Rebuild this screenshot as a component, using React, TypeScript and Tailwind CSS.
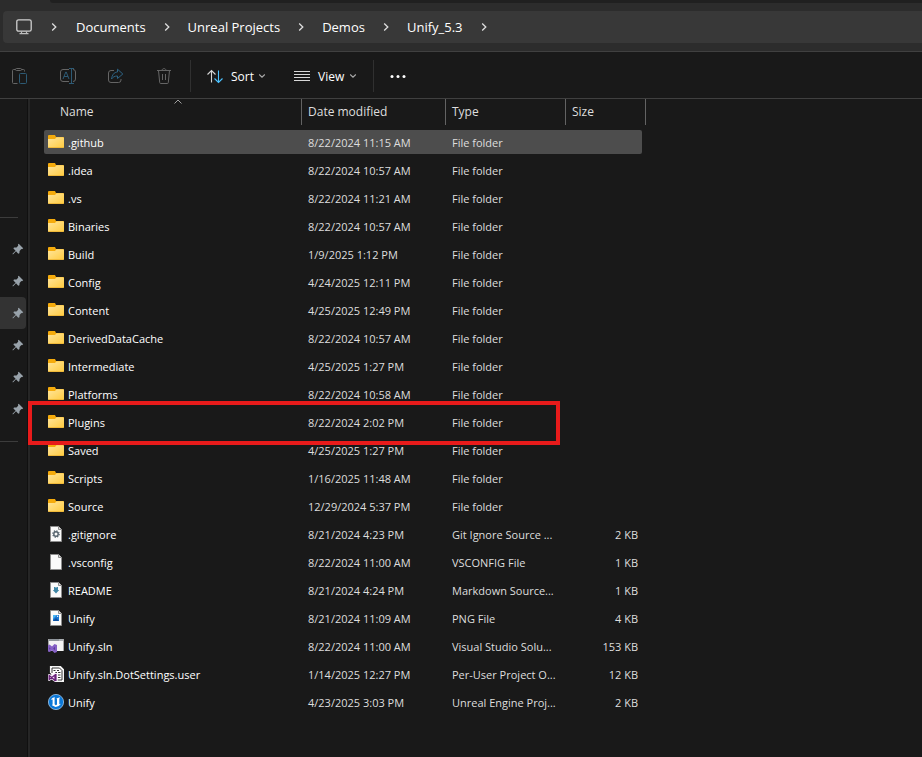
import { Fragment, type ReactNode } from "react";

type IconKind = "folder" | "gear" | "blank" | "markdown" | "image" | "solution" | "settings" | "unreal";

interface Entry {
  name: string;
  modified: string;
  type: string;
  size?: string;
  icon: IconKind;
}

const folder = (name: string, modified: string): Entry => ({ name, modified, type: "File folder", icon: "folder" });

const entries: Entry[] = [
  folder(".github", "8/22/2024 11:15 AM"),
  folder(".idea", "8/22/2024 10:57 AM"),
  folder(".vs", "8/22/2024 11:21 AM"),
  folder("Binaries", "8/22/2024 10:57 AM"),
  folder("Build", "1/9/2025 1:12 PM"),
  folder("Config", "4/24/2025 12:11 PM"),
  folder("Content", "4/25/2025 12:49 PM"),
  folder("DerivedDataCache", "8/22/2024 10:57 AM"),
  folder("Intermediate", "4/25/2025 1:27 PM"),
  folder("Platforms", "8/22/2024 10:58 AM"),
  folder("Plugins", "8/22/2024 2:02 PM"),
  folder("Saved", "4/25/2025 1:27 PM"),
  folder("Scripts", "1/16/2025 11:48 AM"),
  folder("Source", "12/29/2024 5:37 PM"),
  { name: ".gitignore", modified: "8/21/2024 4:23 PM", type: "Git Ignore Source ...", size: "2 KB", icon: "gear" },
  { name: ".vsconfig", modified: "8/22/2024 11:00 AM", type: "VSCONFIG File", size: "1 KB", icon: "blank" },
  { name: "README", modified: "8/21/2024 4:24 PM", type: "Markdown Source...", size: "1 KB", icon: "markdown" },
  { name: "Unify", modified: "8/21/2024 11:09 AM", type: "PNG File", size: "4 KB", icon: "image" },
  { name: "Unify.sln", modified: "8/22/2024 11:00 AM", type: "Visual Studio Solu...", size: "153 KB", icon: "solution" },
  { name: "Unify.sln.DotSettings.user", modified: "1/14/2025 12:27 PM", type: "Per-User Project O...", size: "12 KB", icon: "settings" },
  { name: "Unify", modified: "4/23/2025 3:03 PM", type: "Unreal Engine Proj...", size: "2 KB", icon: "unreal" },
];

const crumbs = ["Documents", "Unreal Projects", "Demos", "Unify_5.3"];

function Svg({ children }: { children: ReactNode }) {
  return (
    <svg viewBox="0 0 16 16" className="size-4 shrink-0" fill="none" aria-hidden="true">
      {children}
    </svg>
  );
}

function Page() {
  return (
    <>
      <path d="M2.5 .5h8l3 3v12h-11z" fill="#fafafa" stroke="#8d8d8d" />
      <path d="M10.5 .5v3h3" fill="#ddd" stroke="#8d8d8d" />
    </>
  );
}

function FileIcon({ kind }: { kind: IconKind }) {
  switch (kind) {
    case "folder":
      return (
        <Svg>
          <defs>
            <linearGradient id="folderFront" x1="0" y1="0" x2="1" y2="1">
              <stop offset="0" stopColor="#ffe59c" />
              <stop offset="1" stopColor="#ffcb3f" />
            </linearGradient>
          </defs>
          <path d="M0 2a1 1 0 0 1 1-1h6l1 2h7a1 1 0 0 1 1 1v4H0z" fill="#f5ab0c" />
          <path d="M0 5h7l1.500-1.800H15a1 1 0 0 1 1 1V13a1 1 0 0 1-1 1H1a1 1 0 0 1-1-1z" fill="url(#folderFront)" />
          <path d="M.5 13.500h15" stroke="#f0b93a" />
        </Svg>
      );
    case "gear":
      return (
        <Svg>
          <Page />
          <circle cx="8" cy="8" r="2.2" stroke="#56646e" strokeWidth="1.4" />
          <circle cx="8" cy="8" r="3.2" stroke="#56646e" strokeWidth="1.2" strokeDasharray="1.3 1.2" />
        </Svg>
      );
    case "blank":
      return (
        <Svg>
          <Page />
        </Svg>
      );
    case "markdown":
      return (
        <Svg>
          <Page />
          <path d="M6 5h1l1 .8L9 5h1v3h1.2L8 11.5 4.8 8H6z" fill="#3f87a6" />
        </Svg>
      );
    case "image":
      return (
        <Svg>
          <Page />
          <path d="M5 5h6v6H5z" fill="#1976d2" />
          <path d="M5 5h4L5 9z" fill="#49b5f5" />
          <path d="M5 11l3-3 3 3z" fill="#0b4fa0" />
          <circle cx="9.6" cy="6.3" r=".7" fill="#fff" />
        </Svg>
      );
    case "solution":
      return (
        <Svg>
          <path d="M0 1h16v12H0z" fill="#f4f4f4" />
          <path d="M0 1h16v2H0z" fill="#8f959b" />
          <path d="M.5 1v12M15.5 1v12" stroke="#a5a5a5" />
          <path d="M11.500 2h1M13.500 2h1" stroke="#fff" />
          <path d="M0 7.500l1.500-1L4 8.500 6.500 6 9 7v7l-2.500 1L4 12.500 1.500 14 0 13.500z" fill="#8661c5" />
          <path d="M1.200 9.200v2.600l1.400-1.300zM7 8.800v3.400l-1.800-1.700z" fill="#5b3a9b" />
        </Svg>
      );
    case "settings":
      return (
        <Svg>
          <path d="M2.500 7V.6h10l2.900 2.900v11.900H7" fill="#fff" stroke="#f4f4f4" strokeWidth="1.200" />
          <path d="M4 7V2h7.500L14 4.500V14H9.500" stroke="#333" />
          <path d="M5.500 4.500h2M9 4.500h2M7 6.500h2M10 6.500h2.500M10 9h2.500M10 11.500h2.500" stroke="#333" />
          <path d="M0 8.500l1.500-.5 2 1L7 6.500l2.500 1v7.800L7 16l-3.500-2.500-2 1.500L0 14.500z" fill="#f8f0fa" />
          <path d="M1.200 9.500v4l5.800-4.500v5.500z" stroke="#68217a" strokeWidth="1.400" strokeLinejoin="round" />
          <path d="M7.800 8v7" stroke="#68217a" strokeWidth="1.600" />
        </Svg>
      );
    case "unreal":
      return (
        <Svg>
          <circle cx="8" cy="8" r="7.600" fill="#0b78d8" stroke="#9fc9ee" strokeWidth=".8" />
          <path
            d="M3 5.800C4.200 4 5.400 3.300 7 3.300L6.600 4.300V10.300L7.800 11.200 9 10.500V5L8.300 4.500 12 3.300 11.300 5V10.300L12.800 9.800C11.700 11.800 10 12.800 7.500 12.900L4 11.300 4.600 10.300V5.500z"
            fill="#fff"
          />
        </Svg>
      );
  }
}

function ChevronRight() {
  return (
    <svg viewBox="0 0 6 8" className="h-2 w-1.5" fill="none" aria-hidden="true">
      <path d="M1.200 .5 4.800 4 1.200 7.500" stroke="#dedede" strokeWidth="1.300" />
    </svg>
  );
}

function ChevronDown() {
  return (
    <svg viewBox="0 0 8 8" className="size-2" fill="none" aria-hidden="true">
      <path d="M1.200 2.500 4 5.200 6.800 2.500" stroke="#a8a8a8" strokeWidth="1.100" />
    </svg>
  );
}

function AddressBar() {
  return (
    <header className="border-b border-[#404040] bg-[#2c2c2c]">
      <div className="ml-[50px] h-[3px] rounded-bl-sm bg-[#202020]" />
      <nav aria-label="Address" className="mt-2 mb-2 ml-[3px] flex h-8 items-center rounded-l-[4px] bg-[#383838] pl-[13px] text-[13px] leading-5 text-white">
        <button aria-label="This PC" className="size-4">
          <Svg>
            <rect x=".8" y=".8" width="14.400" height="11.400" rx="1.800" stroke="#cfcfcf" strokeWidth="1.300" />
            <path d="M5.500 12.500v2M10.500 12.500v2M3.500 14.600h9" stroke="#bdbdbd" strokeWidth="1.200" />
          </Svg>
        </button>
        <span className="flex w-11 justify-center">
          <ChevronRight />
        </span>
        {crumbs.map((crumb) => (
          <Fragment key={crumb}>
            <a href="#" className="whitespace-nowrap">{crumb}</a>
            <span className="flex w-[42px] justify-center">
              <ChevronRight />
            </span>
          </Fragment>
        ))}
      </nav>
    </header>
  );
}

function ToolButton({ label, children }: { label: string; children: ReactNode }) {
  return (
    <button aria-label={label} disabled className="flex h-8 w-10 items-center justify-center">
      {children}
    </button>
  );
}

function Toolbar() {
  return (
    <div role="toolbar" aria-label="Commands" className="flex h-[47px] items-center border-b border-[#404040] pt-px text-[12px] leading-4 text-white">
      <div className="flex gap-2">
        <ToolButton label="Paste">
          <Svg>
            <path d="M5.500 15.500h-4a1 1 0 0 1-1-1v-12a1 1 0 0 1 1-1h2M9.500 1.500h2a1 1 0 0 1 1 1v1" stroke="#656565" />
            <rect x="3.500" y=".5" width="6" height="2" rx="1" stroke="#656565" />
            <rect x="7.500" y="5.500" width="7" height="10" rx="1" stroke="#2d5a74" />
          </Svg>
        </ToolButton>
        <ToolButton label="Rename">
          <Svg>
            <path d="M9 1.500H3a2.500 2.500 0 0 0-2.500 2.500v7A2.500 2.500 0 0 0 3 13.500h6M13 1.500a2.500 2.500 0 0 1 2.500 2.500v7a2.500 2.500 0 0 1-2.500 2.500" stroke="#656565" />
            <path d="M3 11l2.800-7h.4L9 11M4 8.500h4M11.500 .5v15M9 .5h5M9 15.500h5" stroke="#2d5a74" />
          </Svg>
        </ToolButton>
        <ToolButton label="Share">
          <Svg>
            <path d="M6 2.500H3A2.500 2.500 0 0 0 .5 5v7A2.500 2.500 0 0 0 3 14.500h7.500A2.500 2.500 0 0 0 13 12v-1" stroke="#656565" />
            <path d="M9.500 1.200 14.800 6l-5.300 4.500V8C6.500 8 5 9 3.500 11 4 7 6 4.200 9.500 4z" stroke="#2d6384" strokeLinejoin="round" />
          </Svg>
        </ToolButton>
        <ToolButton label="Delete">
          <Svg>
            <path d="M1 2.500h14M6 2.500c0-2.500 4-2.500 4 0M2.500 2.500l1.200 12a1 1 0 0 0 1 1h6.600a1 1 0 0 0 1-1l1.200-12M6.500 6v6M9.500 6v6" stroke="#656565" />
          </Svg>
        </ToolButton>
      </div>
      <span className="ml-1.5 h-8 w-px bg-[#303030]" />
      <button className="ml-2 flex h-8 items-center px-2">
        <Svg>
          <path d="M4.500 14.500v-12M.5 6.500l4-4 4 4" stroke="#d5d5d5" strokeWidth="1.100" />
          <path d="M11.500 2.500v12M7.500 10.500l4 4 4-4" stroke="#4cc2ff" strokeWidth="1.100" />
        </Svg>
        <span className="mr-1 ml-2 pt-0.5">Sort</span>
        <ChevronDown />
      </button>
      <button className="ml-3 flex h-8 items-center px-2">
        <Svg>
          <path d="M0 3.500h16M0 6.500h16M0 9.500h16M0 12.500h16" stroke="#d8d8d8" />
        </Svg>
        <span className="mr-[5px] ml-2 pt-0.5">View</span>
        <ChevronDown />
      </button>
      <span className="ml-2 h-8 w-px bg-[#303030]" />
      <button aria-label="See more" className="ml-2 flex h-8 items-center px-2">
        <Svg>
          <circle cx="2" cy="8.500" r="1.500" fill="#fff" />
          <circle cx="8" cy="8.500" r="1.500" fill="#fff" />
          <circle cx="14" cy="8.500" r="1.500" fill="#fff" />
        </Svg>
      </button>
    </div>
  );
}

function Pin() {
  return (
    <svg viewBox="0 0 12 12" className="size-3" aria-hidden="true">
      <path d="M6.700 .8 11.200 5.300 10 6.200 9.300 6 7.600 8 7.400 10.300 6.300 10.800 4 8.300 1.200 11.300.5 11.300.7 10.500 3.600 7.800 1.400 5.500 2 4.500 4.500 4.500 6.200 2.800 6 1.600z" fill="#98a2aa" />
    </svg>
  );
}

function Sidebar() {
  return (
    <aside className="flex w-[30px] shrink-0 justify-between">
      <div className="w-[26px] pt-[118px]">
        <hr className="mr-2 mb-[15px] border-[#3c3c3c]" />
        {[0, 1, 2, 3, 4, 5].map((i) => (
          <button
            key={i}
            aria-label="Pinned folder"
            className={`flex h-8 w-full items-center justify-end pr-0.5 ${i === 2 ? "rounded-r-sm bg-[#333333]" : ""}`}
          >
            <Pin />
          </button>
        ))}
        <hr className="mt-4 mr-2 border-[#3c3c3c]" />
      </div>
      <div className="w-[3px] border-l border-[#101010] bg-[#262626]" />
    </aside>
  );
}

function HeaderCell({ children, first }: { children: ReactNode; first?: boolean }) {
  return (
    <th scope="col" className="h-[29px] p-0 text-left align-top font-normal">
      <div className={first ? "relative flex h-[26px] items-center pl-4" : "flex h-[26px] items-center border-l border-[#636363] pl-1.5"}>
        {children}
      </div>
    </th>
  );
}

function FileTable() {
  return (
    <table className="ml-3.5 w-[602px] shrink-0 table-fixed border-collapse self-start text-[12px] leading-[18px] whitespace-nowrap text-[#dedede]">
      <colgroup>
        <col className="w-[257px]" />
        <col className="w-36" />
        <col className="w-[120px]" />
        <col className="w-[81px]" />
      </colgroup>
      <thead>
        <tr>
          <HeaderCell first>
            Name
            <svg viewBox="0 0 8 5" className="absolute top-0 left-[130px] h-[5px] w-2" fill="none" aria-hidden="true">
              <path d="M.5 4.500 4 1l3.500 3.500" stroke="#a0a0a0" />
            </svg>
          </HeaderCell>
          <HeaderCell>Date modified</HeaderCell>
          <HeaderCell>Type</HeaderCell>
          <th scope="col" className="h-[29px] p-0 text-left align-top font-normal">
            <div className="flex h-[26px] items-center border-x border-[#636363] pl-1.5">Size</div>
          </th>
        </tr>
      </thead>
      <tbody className="text-[11px]">
        {entries.map((entry, i) => {
          const fill = i === 0 ? "bg-[#4d4d4d]" : "";
          return (
            <tr key={i}>
              <td className="px-0 py-0.5">
                <div className={`relative flex h-6 items-center gap-1 rounded-l-xs pl-1 text-white ${fill}`}>
                  <FileIcon kind={entry.icon} />
                  <span className="pt-0.5">{entry.name}</span>
                  {entry.name === "Plugins" && (
                    <div className="pointer-events-none absolute -top-[9px] -left-4 z-10 h-11 w-[532px] border-4 border-[#e81b1b]" />
                  )}
                </div>
              </td>
              <td className="px-0 py-0.5">
                <div className={`flex h-6 items-center pt-0.5 pl-[7px] ${fill}`}>{entry.modified}</div>
              </td>
              <td className="px-0 py-0.5">
                <div className={`flex h-6 items-center pt-0.5 pl-[7px] ${fill}`}>{entry.type}</div>
              </td>
              <td className="py-0.5 pr-1 pl-0">
                <div className={`flex h-6 items-center justify-end rounded-r-xs pt-0.5 pr-1 ${fill}`}>{entry.size}</div>
              </td>
            </tr>
          );
        })}
      </tbody>
    </table>
  );
}

export default function App() {
  return (
    <div className="flex min-h-screen flex-col overflow-x-hidden bg-[#191919] font-['Open_Sans','Noto_Sans',sans-serif]">
      <AddressBar />
      <Toolbar />
      <main className="flex grow">
        <Sidebar />
        <FileTable />
      </main>
    </div>
  );
}
